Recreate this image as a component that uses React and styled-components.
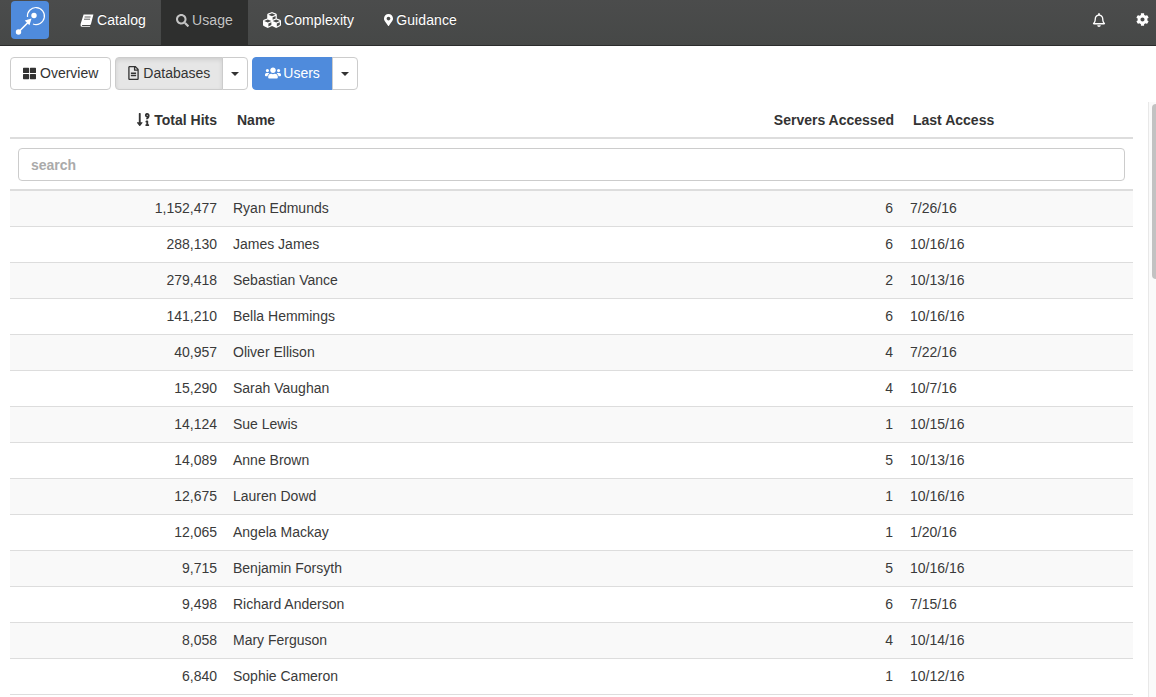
import styled, { createGlobalStyle } from 'styled-components';
import {
  FaCog,
  FaCubes,
  FaMapMarkerAlt,
  FaRegBell,
  FaRegFileAlt,
  FaSearch,
  FaSortNumericDownAlt,
  FaThLarge,
  FaUsers,
} from 'react-icons/fa';

const GlobalStyle = createGlobalStyle`
  html, body {
    margin: 0;
    height: 100%;
    overflow: hidden;
    background: #fff;
  }
  body {
    font-family: "Liberation Sans", Arial, sans-serif;
    font-size: 14px;
    color: #3a3a3a;
  }
`;

const Page = styled.div`
  position: relative;
  height: 697px;
  overflow: hidden;
`;

const Navbar = styled.nav`
  display: flex;
  align-items: stretch;
  height: 45px;
  background: linear-gradient(#4b4c4c, #464847);
  border-bottom: 1px solid #2b2c2c;
`;

const LogoBox = styled.div`
  display: flex;
  width: 38px;
  height: 38px;
  margin: 1px 16px 0 11px;
  border-radius: 4px;
  background: #4f8bdc;
`;

const NavItem = styled.a`
  display: flex;
  align-items: center;
  gap: 3px;
  padding: 0 15px 5px;
  color: ${(p) => (p.$active ? '#c4c4c4' : '#fff')};
  background: ${(p) => (p.$active ? '#2e2f2e' : 'transparent')};
  font-size: 14px;
  letter-spacing: 0.1px;
  text-shadow: 0 -1px 0 rgba(0, 0, 0, 0.25);
`;

const MarkerIcon = styled(FaMapMarkerAlt)`
  width: 9px;
  height: 12px;
`;

const NavRight = styled.div`
  display: flex;
  align-items: center;
  gap: 30px;
  margin-left: auto;
  padding: 0 7px 6px 0;
  color: #fff;
`;

const Toolbar = styled.div`
  display: flex;
  gap: 4px;
  padding: 11px 10px 0;
`;

const ButtonGroup = styled.div`
  display: flex;
`;

const Button = styled.button`
  display: flex;
  align-items: center;
  gap: ${(p) => (p.$primary ? '2px' : '4px')};
  height: 33px;
  padding: 0 12px 1px;
  font: inherit;
  color: ${(p) => (p.$primary ? '#fff' : '#333')};
  background: ${(p) => (p.$primary ? '#4f8bdc' : p.$active ? '#e6e6e6' : '#fff')};
  border: 1px solid ${(p) => (p.$primary ? '#4f8bdc' : '#ccc')};
  border-radius: 4px 0 0 4px;
  box-shadow: ${(p) => (p.$active ? 'inset 0 2px 4px rgba(0, 0, 0, 0.1)' : 'none')};

  &:only-child {
    border-radius: 4px;
  }
`;

const FileIcon = styled(FaRegFileAlt)`
  width: 11px;
  height: 14px;
`;

const CaretButton = styled.button`
  display: flex;
  align-items: center;
  justify-content: center;
  width: 26px;
  height: 33px;
  margin-left: -1px;
  padding: 0;
  background: #fff;
  border: 1px solid #ccc;
  border-radius: 0 4px 4px 0;
`;

const Caret = styled.span`
  width: 0;
  height: 0;
  border-top: 4px solid #333;
  border-left: 4px solid transparent;
  border-right: 4px solid transparent;
`;

const Table = styled.div`
  width: 1123px;
  margin: 12px 0 0 10px;
`;

const columns = '215px 462px 215px 1fr';

const HeadRow = styled.div`
  display: grid;
  grid-template-columns: ${columns};
  align-items: center;
  height: 35px;
  border-bottom: 2px solid #ddd;
  font-weight: bold;
  color: #333;
`;

const HeadCell = styled.div`
  display: flex;
  align-items: center;
  justify-content: ${(p) => (p.$right ? 'flex-end' : 'flex-start')};
  gap: 3px;
  padding: ${(p) => (p.$right ? '0 8px 0 0' : `0 0 0 ${p.$inset || 12}px`)};
`;

const SearchRow = styled.div`
  height: 52px;
  padding: 9px 8px 0;
  box-sizing: border-box;
  border-bottom: 2px solid #ddd;
`;

const SearchInput = styled.input`
  display: block;
  width: 100%;
  height: 33px;
  box-sizing: border-box;
  padding: 0 12px;
  font: inherit;
  font-weight: bold;
  color: #333;
  border: 1px solid #ccc;
  border-radius: 4px;

  &::placeholder {
    color: #aaa;
    opacity: 1;
  }
`;

const Row = styled.div`
  display: grid;
  grid-template-columns: ${columns};
  align-items: center;
  height: 36px;
  padding-bottom: 1px;
  box-sizing: border-box;
  border-bottom: 1px solid #ddd;
  background: ${(p) => (p.$striped ? '#f9f9f9' : '#fff')};
`;

const Cell = styled.div`
  padding: ${(p) => (p.$right ? `0 ${p.$inset || 8}px 0 0` : '0 0 0 8px')};
  text-align: ${(p) => (p.$right ? 'right' : 'left')};
`;

const ScrollTrack = styled.div`
  position: absolute;
  top: 102px;
  right: 0;
  bottom: 0;
  width: 7px;
  background: #fafafa;
  border-left: 1px solid #e8e8e8;
`;

const ScrollThumb = styled.div`
  position: absolute;
  top: 2px;
  right: 0;
  width: 4px;
  height: 175px;
  background: #c2c2c2;
  border-radius: 4px 0 0 4px;
`;

const users = [
  ['1,152,477', 'Ryan Edmunds', 6, '7/26/16'],
  ['288,130', 'James James', 6, '10/16/16'],
  ['279,418', 'Sebastian Vance', 2, '10/13/16'],
  ['141,210', 'Bella Hemmings', 6, '10/16/16'],
  ['40,957', 'Oliver Ellison', 4, '7/22/16'],
  ['15,290', 'Sarah Vaughan', 4, '10/7/16'],
  ['14,124', 'Sue Lewis', 1, '10/15/16'],
  ['14,089', 'Anne Brown', 5, '10/13/16'],
  ['12,675', 'Lauren Dowd', 1, '10/16/16'],
  ['12,065', 'Angela Mackay', 1, '1/20/16'],
  ['9,715', 'Benjamin Forsyth', 5, '10/16/16'],
  ['9,498', 'Richard Anderson', 6, '7/15/16'],
  ['8,058', 'Mary Ferguson', 4, '10/14/16'],
  ['6,840', 'Sophie Cameron', 1, '10/12/16'],
];

const Logo = () => (
  <svg width="38" height="38" viewBox="0 0 38 38" fill="none">
    <path d="M16.5 16 A8.5 8.5 0 1 1 22 23" stroke="#fff" strokeWidth="1.2" />
    <circle cx="23" cy="14.5" r="2.7" fill="#fff" />
    <circle cx="7.5" cy="31" r="2.7" fill="#fff" />
    <path d="M8 30.5 L17 21.5" stroke="#fff" strokeWidth="1.6" />
    <path d="M20.5 17.5 L13.8 19.6 L18.4 24.2 Z" fill="#fff" />
  </svg>
);

// the old slanted book glyph, the package only has an upright one
const BookIcon = () => (
  <svg width="14" height="13" viewBox="0 0 14 13">
    <path
      d="M3.6 0.5 H13.4 L10.9 10.2 Q10.6 11 9.8 11 H2.6 Q1.8 11 1.9 11.6 Q2 12.1 2.8 12.1 H10.2 L9.9 12.8 H2.2 Q0.4 12.8 0.5 10.9 Q0.6 9.9 1 8.8 Z"
      fill="#fff"
    />
    <path d="M4.6 3 H10.6 M4 5.2 H10" stroke="#4a4b4b" strokeWidth="0.9" />
  </svg>
);

const App = () => (
  <Page>
    <GlobalStyle />
    <Navbar>
      <LogoBox>
        <Logo />
      </LogoBox>
      <NavItem><BookIcon /> Catalog</NavItem>
      <NavItem $active><FaSearch size={13} /> Usage</NavItem>
      <NavItem><FaCubes size={18} /> Complexity</NavItem>
      <NavItem><MarkerIcon /> Guidance</NavItem>
      <NavRight>
        <FaRegBell size={14} />
        <FaCog size={13} />
      </NavRight>
    </Navbar>

    <Toolbar>
      <ButtonGroup>
        <Button><FaThLarge size={13} /> Overview</Button>
      </ButtonGroup>
      <ButtonGroup>
        <Button $active><FileIcon /> Databases</Button>
        <CaretButton><Caret /></CaretButton>
      </ButtonGroup>
      <ButtonGroup>
        <Button $primary><FaUsers size={16} /> Users</Button>
        <CaretButton><Caret /></CaretButton>
      </ButtonGroup>
    </Toolbar>

    <Table>
      <HeadRow>
        <HeadCell $right><FaSortNumericDownAlt size={15} /> Total Hits</HeadCell>
        <HeadCell>Name</HeadCell>
        <HeadCell $right>Servers Accessed</HeadCell>
        <HeadCell $inset={11}>Last Access</HeadCell>
      </HeadRow>
      <SearchRow>
        <SearchInput placeholder="search" />
      </SearchRow>
      {users.map(([hits, name, servers, last], i) => (
        <Row key={name} $striped={i % 2 === 0}>
          <Cell $right>{hits}</Cell>
          <Cell>{name}</Cell>
          <Cell $right $inset={9}>{servers}</Cell>
          <Cell>{last}</Cell>
        </Row>
      ))}
    </Table>

    <ScrollTrack>
      <ScrollThumb />
    </ScrollTrack>
  </Page>
);

export default App;
